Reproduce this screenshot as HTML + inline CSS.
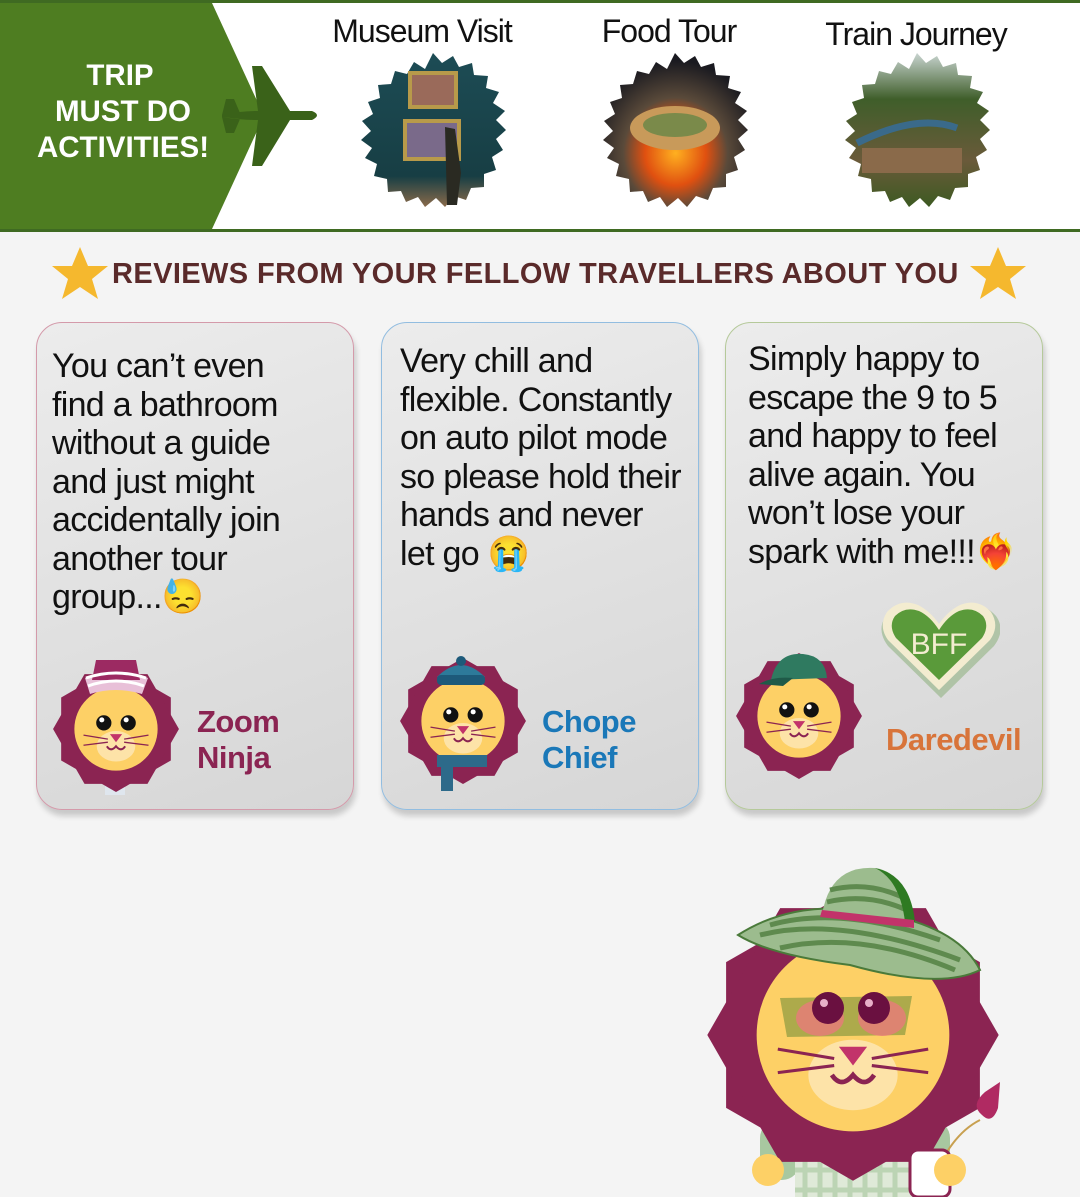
<!DOCTYPE html>
<html><head><meta charset="utf-8"><style>
*{margin:0;padding:0;box-sizing:border-box}
body{width:1080px;height:1197px;background:#f4f4f4;position:relative;overflow:hidden;font-family:"Liberation Sans",Arial,sans-serif}
.hdr{position:absolute;left:0;top:0;width:1080px;height:232px;background:#fff;border-top:3px solid #3f6a22;border-bottom:3px solid #3f6a22}
.abs{position:absolute}
.ttl{position:absolute;font-size:32px;color:#111;letter-spacing:-1px;white-space:nowrap;transform:translateX(-50%)}
.card{position:absolute;top:322px;width:318px;height:488px;border-radius:26px;background:linear-gradient(160deg,#ececec,#d6d6d6);box-shadow:2px 6px 6px rgba(0,0,0,.18)}
.ct{position:absolute;font-size:34px;line-height:38.5px;letter-spacing:-0.7px;color:#111}
.nm{position:absolute;font-weight:bold;font-size:31px;line-height:36px;letter-spacing:-0.5px}
</style></head><body>
<svg width="0" height="0" style="position:absolute">
<defs>
<symbol id="lion" viewBox="-65 -65 130 130">
<polygon points="0,-62 54,-31 54,31 0,62 -54,31 -54,-31" fill="#8b2452"/>
<polygon points="62,0 31,54 -31,54 -62,0 -31,-54 31,-54" fill="#8b2452"/>
<circle r="41" fill="#fdd066"/>
<ellipse cy="17" rx="19" ry="15" fill="#fde3a8"/>
<circle cx="-12" cy="-6" r="7.5" fill="#111"/><circle cx="12" cy="-6" r="7.5" fill="#111"/>
<circle cx="-14" cy="-9" r="2.5" fill="#fff"/><circle cx="10" cy="-9" r="2.5" fill="#fff"/>
<path d="M-6 5 L6 5 L0 13 Z" fill="#c2336a"/>
<path d="M-9 17 Q-5 23 0 17 Q5 23 9 17" stroke="#8b2452" stroke-width="2" fill="none"/>
<path d="M-8 10 L-32 6 M-8 13 L-32 16 M8 10 L32 6 M8 13 L32 16" stroke="#8b2452" stroke-width="1.3"/>
</symbol>
</defs></svg>

<div class="hdr"></div>
<svg class="abs" style="left:0;top:3px" width="330" height="226">
<polygon points="0,0 212,0 264,113 212,226 0,226" fill="#4e7d21"/>
<path d="M222 112 Q240 108 258 108 L252 63 L262 63 L290 108 L312 108 Q322 112 312 117 L290 117 L262 163 L252 163 L258 117 Q240 117 222 114 Z M222 112 L226 96 L234 96 L240 110 Z M222 114 L226 130 L234 130 L240 116 Z" fill="#3a6219"/>
<text x="120" y="82" fill="#fff" font-size="29.5" font-weight="bold" text-anchor="middle" font-family="Liberation Sans">TRIP</text>
<text x="123" y="118" fill="#fff" font-size="29.5" font-weight="bold" text-anchor="middle" font-family="Liberation Sans">MUST DO</text>
<text x="123" y="154" fill="#fff" font-size="29.5" font-weight="bold" text-anchor="middle" font-family="Liberation Sans">ACTIVITIES!</text>
</svg>
<div class="ttl" style="left:422px;top:13px">Museum Visit</div>
<div class="ttl" style="left:669px;top:13px">Food Tour</div>
<div class="ttl" style="left:916px;top:16px">Train Journey</div>
<svg class="abs" style="left:350px;top:50px" width="660" height="165">
<defs>
<polygon id="burst" points="0,-80 9,-70 20,-77 26,-66 39,-70 41,-58 55,-57 53,-45 66,-41 60,-30 72,-22 63,-13 73,-3 63,6 70,17 59,24 63,37 51,41 51,54 38,55 33,67 21,63 12,74 3,65 -8,74 -15,64 -27,69 -32,58 -45,59 -46,46 -59,43 -56,31 -68,25 -61,15 -72,7 -62,-2 -71,-12 -60,-19 -65,-31 -53,-35 -55,-48 -42,-49 -38,-62 -26,-59 -19,-71 -8,-64"/>
<linearGradient id="g1" x1="0" y1="0" x2="0" y2="1"><stop offset="0" stop-color="#1d4c55"/><stop offset=".8" stop-color="#173e44"/><stop offset="1" stop-color="#8a6a4a"/></linearGradient>
<radialGradient id="g2" cx=".5" cy=".65" r=".6"><stop offset="0" stop-color="#ffb020"/><stop offset=".35" stop-color="#e05010"/><stop offset=".6" stop-color="#5a4a3a"/><stop offset="1" stop-color="#1a1a20"/></radialGradient>
<linearGradient id="g3" x1="0" y1="0" x2="0" y2="1"><stop offset="0" stop-color="#c8d4d0"/><stop offset=".3" stop-color="#3f5e2a"/><stop offset=".7" stop-color="#6a5a3a"/><stop offset="1" stop-color="#3d5a22"/></linearGradient>
</defs>
<g transform="translate(83,83)"><use href="#burst" fill="url(#g1)"/><rect x="-25" y="-62" width="50" height="38" fill="#b89a4a"/><rect x="-21" y="-58" width="42" height="30" fill="#9a6a5a"/><rect x="-30" y="-14" width="58" height="42" fill="#b89a4a"/><rect x="-26" y="-10" width="50" height="34" fill="#7a6a8a"/><path d="M12 -6 L22 -4 L28 40 L24 72 L14 72 Z" fill="#2a2a22"/></g>
<g transform="translate(325,83)"><use href="#burst" fill="url(#g2)"/><ellipse cx="0" cy="-5" rx="45" ry="22" fill="#c89a5a"/><ellipse cx="0" cy="-8" rx="32" ry="12" fill="#7a8a4a"/></g>
<g transform="translate(567,83)"><use href="#burst" fill="url(#g3)"/><path d="M-60 10 Q0 -20 40 -5" stroke="#3a6a8a" stroke-width="7" fill="none"/><rect x="-55" y="15" width="100" height="25" fill="#8a6a4a"/></g>
</svg>

<svg class="abs" style="left:50px;top:247px" width="980" height="60">
<defs><polygon id="star" points="0,-28 8,-9 28,-9 12,4 18,24 0,12 -18,24 -12,4 -28,-9 -8,-9" fill="#f5b82e"/></defs>
<use href="#star" x="30" y="28"/><use href="#star" x="948" y="28"/>
</svg>
<div class="abs" style="left:112px;top:258px;font-size:29px;font-weight:bold;color:#5a2a2a;white-space:nowrap;letter-spacing:0.4px">REVIEWS FROM YOUR FELLOW TRAVELLERS ABOUT YOU</div>

<div class="card" style="left:36px;border:1.5px solid #d49aaa"></div>
<div class="card" style="left:381px;border:1.5px solid #92bde0"></div>
<div class="card" style="left:725px;border:1.5px solid #b5c99a"></div>

<div class="ct" style="left:52px;top:347px">You can’t even<br>find a bathroom<br>without a guide<br>and just might<br>accidentally join<br>another tour<br>group...😓</div>
<div class="ct" style="left:400px;top:342px">Very chill and<br>flexible. Constantly<br>on auto pilot mode<br>so please hold their<br>hands and never<br>let go 😭</div>
<div class="ct" style="left:748px;top:340px">Simply happy to<br>escape the 9 to 5<br>and happy to feel<br>alive again. You<br>won’t lose your<br>spark with me!!!❤️‍🔥</div>

<svg class="abs" style="left:50px;top:650px" width="132" height="150"><rect x="55" y="120" width="20" height="25" fill="#dfe6ee"/><use href="#lion" x="0" y="13" width="132" height="132"/><path d="M35 28 Q66 14 98 28 L92 44 Q66 36 40 44 Z" fill="#e8c0d8"/><path d="M46 10 L86 10 L90 30 L42 30 Z" fill="#9c2a62"/><path d="M36 28 Q66 18 96 28 M38 36 Q66 26 94 36" stroke="#fff" stroke-width="3" fill="none"/></svg>
<div class="nm" style="left:197px;top:704px;color:#8b2452">Zoom<br>Ninja</div>

<svg class="abs" style="left:397px;top:655px" width="132" height="145"><use href="#lion" x="0" y="0" width="132" height="132"/><path d="M40 22 Q64 -2 88 22 Z" fill="#2d7a9a"/><rect x="40" y="20" width="48" height="10" rx="4" fill="#1d5a7a"/><circle cx="64" cy="6" r="5" fill="#1d5a7a"/><rect x="40" y="100" width="50" height="12" fill="#2d6a8a"/><rect x="44" y="108" width="12" height="28" fill="#2d6a8a"/></svg>
<div class="nm" style="left:542px;top:704px;color:#1a78b8">Chope<br>Chief</div>

<svg class="abs" style="left:733px;top:650px" width="132" height="132"><use href="#lion" x="0" y="0" width="132" height="132"/><path d="M38 30 Q44 2 70 4 Q92 6 94 28 Z" fill="#2f7a60"/><path d="M26 34 Q40 26 60 28 L50 36 Z" fill="#1f5a48"/></svg>
<svg class="abs" style="left:878px;top:598px" width="122" height="100"><path d="M61 96 L8 44 Q-4 28 6 14 Q20 -2 40 6 Q52 12 61 26 Q70 12 82 6 Q102 -2 116 14 Q126 28 114 44 Z" fill="#4a8a2a" opacity=".3" transform="translate(2,4)"/><path d="M61 92 L10 42 Q0 28 9 14 Q22 0 40 7 Q52 13 61 26 Q70 13 82 7 Q100 0 113 14 Q122 28 112 42 Z" fill="#f3ecd0"/><path d="M61 82 L18 40 Q10 28 17 18 Q27 8 41 13 Q52 18 61 32 Q70 18 81 13 Q95 8 105 18 Q112 28 104 40 Z" fill="#5a9a3a"/><text x="61" y="56" fill="#f3ecd0" font-size="30" text-anchor="middle" font-family="Liberation Sans">BFF</text></svg>
<div class="nm" style="left:886px;top:722px;color:#d8743a">Daredevil</div>

<svg class="abs" style="left:700px;top:860px" width="380" height="337" viewBox="0 0 380 337">
<rect x="60" y="260" width="40" height="60" rx="18" fill="#a8c8a0"/>
<rect x="210" y="260" width="40" height="60" rx="18" fill="#a8c8a0"/>
<rect x="95" y="250" width="120" height="90" fill="#dfe9d8"/>
<path d="M105 250 V337 M120 250 V337 M135 250 V337 M150 250 V337 M165 250 V337 M180 250 V337 M195 250 V337 M95 270 H215 M95 290 H215 M95 310 H215 M95 330 H215" stroke="#bcd4b4" stroke-width="5"/>
<g transform="translate(153,175) scale(2.35)"><use href="#lion" x="-65" y="-65" width="130" height="130"/></g>
<circle cx="125" cy="161" r="19" fill="#fdd066"/><circle cx="181" cy="161" r="19" fill="#fdd066"/>
<path d="M80 138 L212 136 L205 175 L87 177 Z" fill="#8a9a40" opacity=".7"/>
<ellipse cx="120" cy="158" rx="24" ry="18" fill="#e87a7a" opacity=".8"/><ellipse cx="182" cy="158" rx="24" ry="18" fill="#e87a7a" opacity=".8"/>
<circle cx="128" cy="148" r="16" fill="#6a1040"/><circle cx="174" cy="148" r="16" fill="#6a1040"/>
<circle cx="124" cy="143" r="4" fill="#e8b0c8"/><circle cx="169" cy="143" r="4" fill="#e8b0c8"/>
<path d="M38 75 Q100 35 190 55 Q260 70 280 110 Q240 130 150 105 Q70 95 38 75 Z" fill="#9cbc8e" stroke="#4a7a3a" stroke-width="2"/>
<path d="M60 75 Q140 55 260 100 M80 88 Q160 70 255 110 M70 65 Q140 45 240 80" stroke="#5e8a4e" stroke-width="5" fill="none"/>
<path d="M122 55 Q130 5 175 8 Q205 12 213 60 Z" fill="#9cbc8e"/>
<path d="M130 30 Q170 20 208 40 M127 42 Q170 32 211 52" stroke="#5e8a4e" stroke-width="5" fill="none"/>
<path d="M175 8 Q210 15 215 62 L205 62 Q200 20 175 8 Z" fill="#2e7a22"/>
<path d="M122 50 L214 60 L214 68 L120 57 Z" fill="#c2336a"/>
<path d="M245 295 Q260 270 280 260" stroke="#c8a050" stroke-width="2" fill="none"/>
<path d="M282 255 Q270 245 285 232 L300 222 L298 248 Q292 265 282 255 Z" fill="#b02a62"/>
<rect x="210" y="290" width="40" height="47" rx="8" fill="#fff" stroke="#8b2452" stroke-width="3"/>
<circle cx="68" cy="310" r="16" fill="#fdd066"/><circle cx="250" cy="310" r="16" fill="#fdd066"/>
</svg>
</body></html>
